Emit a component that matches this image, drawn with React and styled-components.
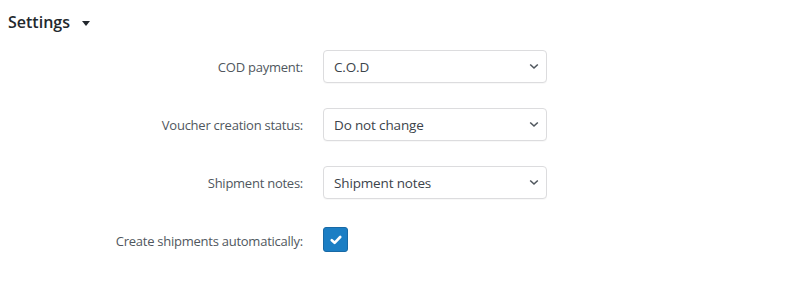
import React from "react";
import styled, { createGlobalStyle } from "styled-components";

const Global = createGlobalStyle`
  html, body { margin: 0; padding: 0; background: #fff; }
  body { font-family: "Open Sans", "Noto Sans", sans-serif; color: #3c434a; }
`;

const Page = styled.div`
  width: 800px;
  height: 290px;
  padding: 8px 8px 0 8px;
  box-sizing: border-box;
`;

const Heading = styled.h2`
  margin: 0;
  display: flex;
  align-items: center;
  gap: 12px;
  font-size: 16px;
  font-weight: 600;
  color: #23282d;
  line-height: 28px;
`;

const Caret = styled.span`
  width: 0;
  height: 0;
  border-left: 4px solid transparent;
  border-right: 4px solid transparent;
  border-top: 5px solid #23282d;
  margin-top: 3px;
`;

const Form = styled.div`
  display: grid;
  grid-template-columns: 295px 224px;
  column-gap: 20px;
  row-gap: 25px;
  margin-top: 14px;
  align-items: center;
`;

const Label = styled.label`
  text-align: right;
  font-size: 13px;
  letter-spacing: -0.25px;
  color: #50575e;
`;

const SelectBox = styled.div`
  height: 33px;
  box-sizing: border-box;
  border: 1px solid #dcdcde;
  border-radius: 4px;
  display: flex;
  align-items: center;
  justify-content: space-between;
  padding: 0 7px 0 10px;
  font-size: 13.5px;
  letter-spacing: -0.15px;
  color: #3c434a;
  background: #fff;
  box-shadow: 0 1px 1px rgba(0,0,0,0.03);
`;

const CheckRow = styled.div`
  display: flex;
  align-items: center;
  height: 33px;
`;

const Check = styled.span`
  width: 25px;
  height: 25px;
  box-sizing: border-box;
  border-radius: 3px;
  background: #1b7ec4;
  border: 1px solid #1869a5;
  display: flex;
  align-items: center;
  justify-content: center;
  margin-top: -2px;
`;

const Chevron = () => (
  <svg width="10" height="7" viewBox="0 0 10 7">
    <path d="M1.2 1.5 L5 5 L8.8 1.5" fill="none" stroke="#50575e" strokeWidth="1.6" />
  </svg>
);

const Tick = () => (
  <svg width="12" height="10" viewBox="0 0 12 10">
    <path d="M1.8 5.2 L4.6 7.8 L10.2 2" fill="none" stroke="#fff" strokeWidth="2.6" strokeLinecap="round" strokeLinejoin="round" />
  </svg>
);

const Select = ({ value }) => (
  <SelectBox>
    <span>{value}</span>
    <Chevron />
  </SelectBox>
);

export default function App() {
  return (
    <Page>
      <Global />
      <Heading>
        Settings <Caret />
      </Heading>
      <Form>
        <Label>COD payment:</Label>
        <Select value="C.O.D" />
        <Label>Voucher creation status:</Label>
        <Select value="Do not change" />
        <Label>Shipment notes:</Label>
        <Select value="Shipment notes" />
        <Label>Create shipments automatically:</Label>
        <CheckRow>
          <Check>
            <Tick />
          </Check>
        </CheckRow>
      </Form>
    </Page>
  );
}
